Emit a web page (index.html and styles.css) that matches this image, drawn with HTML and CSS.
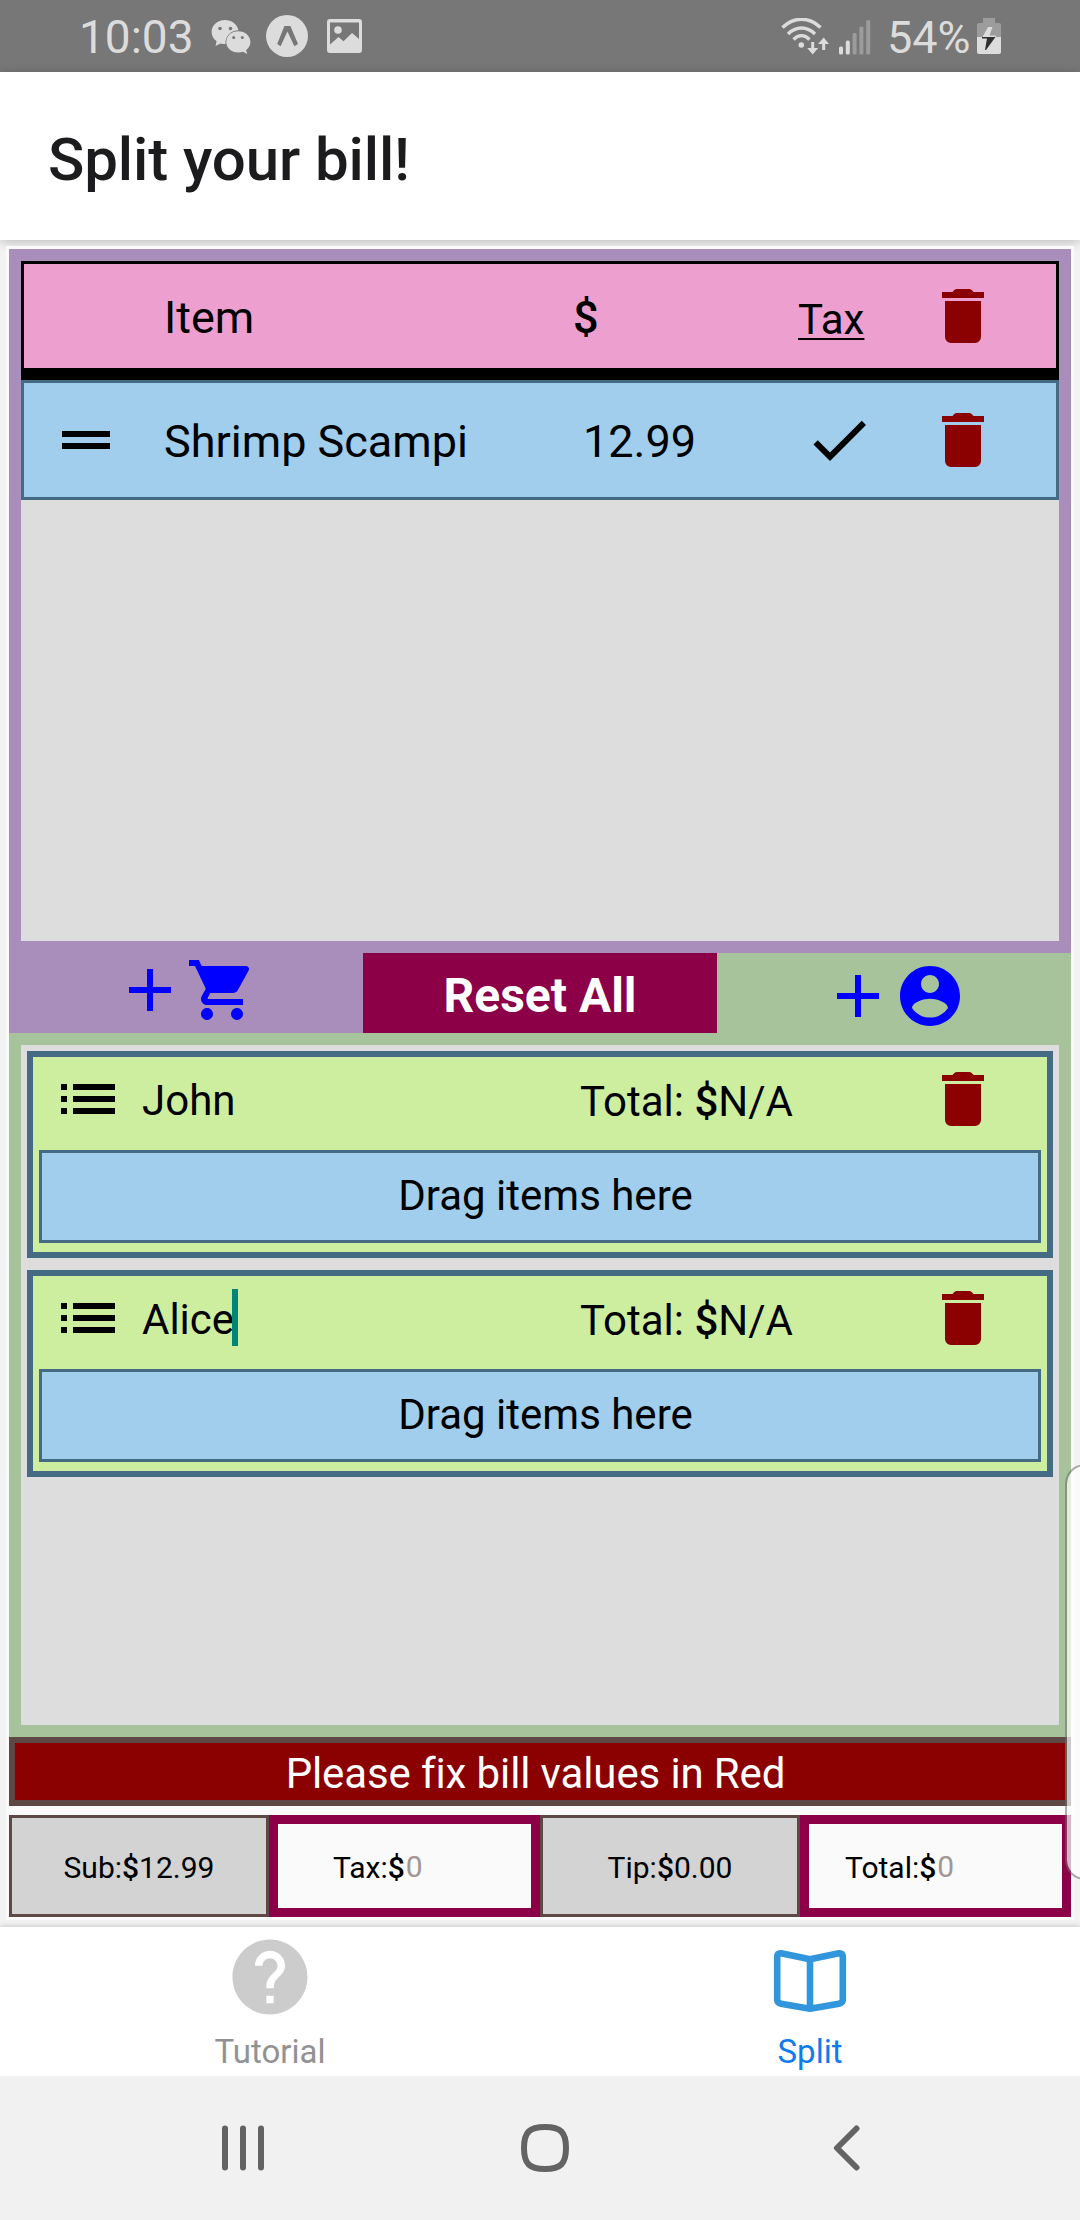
FILE: index.html
```html
<!DOCTYPE html>
<html lang="en">
<head>
<meta charset="utf-8">
<title>Split your bill!</title>
<link rel="stylesheet" href="styles.css">
</head>
<body>
<svg class="sprite" width="0" height="0" aria-hidden="true">
  <symbol id="trash" viewBox="0 0 24 24"><path d="M19 4h-3.5l-.6-.65Q14.500 3 14 3h-4q-.5 0-.9.350L8.500 4H5v2h14zM6 19a2 2 0 0 0 2 2h8a2 2 0 0 0 2-2V7H6z"/></symbol>
  <symbol id="handle" viewBox="0 0 24 24"><path d="M20 9H4v2h16V9zM4 15h16v-2H4v2z"/></symbol>
  <symbol id="check" viewBox="0 0 24 24"><path d="M21 7L9 19l-5.500-5.500 1.410-1.410L9 16.170 19.590 5.590 21 7z"/></symbol>
  <symbol id="list" viewBox="0 0 24 24"><path d="M3 13h2v-2H3v2zm0 4h2v-2H3v2zm0-8h2V7H3v2zm4 4h14v-2H7v2zm0 4h14v-2H7v2zM7 7v2h14V7H7z"/></symbol>
  <symbol id="plus" viewBox="0 0 24 24"><path d="M19 13h-6v6h-2v-6H5v-2h6V5h2v6h6v2z"/></symbol>
  <symbol id="cart" viewBox="0 0 24 24"><path d="M7 18c-1.1 0-1.99.9-1.99 2S5.900 22 7 22s2-.9 2-2-.9-2-2-2zM1 2v2h2l3.600 7.590-1.350 2.450c-.16.28-.25.61-.25.96 0 1.100.9 2 2 2h12v-2H7.420c-.14 0-.25-.11-.25-.25l.03-.12.9-1.630h7.450c.75 0 1.410-.41 1.750-1.030l3.580-6.490c.08-.14.12-.31.12-.48 0-.55-.45-1-1-1H5.210l-.94-2H1zm16 16c-1.1 0-1.99.9-1.99 2s.89 2 1.990 2 2-.9 2-2-.9-2-2-2z"/></symbol>
  <symbol id="person" viewBox="0 0 24 24"><path d="M12 2C6.480 2 2 6.480 2 12s4.480 10 10 10 10-4.480 10-10S17.520 2 12 2zm0 3c1.660 0 3 1.340 3 3s-1.340 3-3 3-3-1.340-3-3 1.340-3 3-3zm0 14.200c-2.500 0-4.710-1.280-6-3.220.03-1.990 4-3.080 6-3.080 1.990 0 5.970 1.090 6 3.080-1.290 1.940-3.500 3.220-6 3.220z"/></symbol>
  <symbol id="help" viewBox="0 0 24 24"><path d="M12 2C6.480 2 2 6.480 2 12s4.480 10 10 10 10-4.480 10-10S17.520 2 12 2zm1 17h-2v-2h2v2zm2.070-7.750l-.9.92C13.450 12.900 13 13.500 13 15h-2v-.5c0-1.100.45-2.100 1.170-2.830l1.240-1.260c.37-.36.59-.86.59-1.410 0-1.100-.9-2-2-2s-2 .9-2 2H8c0-2.210 1.790-4 4-4s4 1.790 4 4c0 .88-.36 1.680-.93 2.250z"/></symbol>
</svg>

<header class="status">
  <span class="clock">10:03</span>
  <svg class="wechat" width="40" height="36" viewBox="0 0 40 36">
    <path d="M14 1C6.500 1 .6 6 .6 13c0 4 2 7.200 5 9.200L4.500 27l5-2.600c1.400.4 3 .6 5 .6C14 17 20 11.500 27.500 11.300 26 5 20.500 1 14 1z"/>
    <path d="M27.300 12.300C20.500 12.300 15.300 17 15.300 23s5.200 10.500 12 10.500c1.700 0 3.200-.3 4.700-.8l4.300 2.300-1.200-3.900c2.700-2 4.300-4.800 4.300-8.100 0-6-5.300-10.700-12.100-10.700z"/>
    <g class="hole"><circle cx="9" cy="9.500" r="1.800"/><circle cx="19.500" cy="9.500" r="1.800"/><circle cx="22.700" cy="18.500" r="1.500"/><circle cx="31.300" cy="18.500" r="1.500"/></g>
  </svg>
  <svg class="expo" width="42" height="42" viewBox="0 0 42 42">
    <circle cx="21" cy="21" r="21"/>
    <path class="hole" d="M18.400 11h6l7.600 18-3.600 2.200L21.400 16.500 14.600 31.200 11.200 29z"/>
  </svg>
  <svg class="photo" width="35" height="34" viewBox="0 0 35 34">
    <path fill-rule="evenodd" d="M3 0h29a3 3 0 0 1 3 3v28a3 3 0 0 1-3 3H3a3 3 0 0 1-3-3V3a3 3 0 0 1 3-3zm0 3.500V25.500l8.500-7.500 5 4.200 8.500-8.200 7 6V3.500z"/>
    <circle cx="11" cy="11" r="3.800"/>
  </svg>
  <span class="spacer"></span>
  <svg class="wifi" width="49" height="37" viewBox="0 0 49 37">
    <g fill="none" stroke="#dcdcdc" stroke-width="3.400">
      <path d="M1.500 9.500C13-1.500 28-1.500 39.500 9.500"/><path d="M7 16C15 8 26 8 34 16"/><path d="M12.500 21.500C17.500 16.500 23.500 16.500 28.500 21.500"/>
    </g>
    <circle cx="20.300" cy="27" r="2.800"/>
    <path d="M30.200 24h3v6h4l-5.500 6.500-5.500-6.500h4zM41.200 32h3v-6H48l-5.300-6.500L37 26h4.200z"/>
  </svg>
  <svg class="signal" width="32" height="35" viewBox="0 0 32 35">
    <rect x="0" y="26.500" width="4" height="8" rx="1.500"/><rect x="6.800" y="20.500" width="4" height="14" rx="1.500"/>
    <g fill="#9c9c9c"><rect x="13.600" y="13" width="4" height="21.500" rx="1.500"/><rect x="20.400" y="6.500" width="4" height="28" rx="1.500"/><rect x="27.200" y="0" width="4" height="34.500" rx="1.500"/></g>
  </svg>
  <span class="percent">54%</span>
  <svg class="battery" width="24" height="36" viewBox="0 0 24 36">
    <path fill="#9c9c9c" d="M6 0h12v5h4q2 0 2 2v13H0V7q0-2 2-2h4z"/>
    <path d="M0 19h24v15q0 2-2 2H2q-2 0-2-2z"/>
    <path d="M11 9h4.500l-3 8.500H19l-.5 1.500H5.500z"/>
    <path fill="#303030" d="M5 19h13.500L9 32h-1l2-11.500H5z"/>
  </svg>
</header>

<div class="titlebar"><h1>Split your bill!</h1></div>

<main class="screen">
  <div class="app">
    <section class="items">
      <div class="row row-head">
        <span></span>
        <span class="name">Item</span>
        <span class="price"><b>$</b></span>
        <span class="tax">Tax</span>
        <svg class="icon danger"><use href="#trash"/></svg>
      </div>
      <div class="row row-item">
        <svg class="icon grip"><use href="#handle"/></svg>
        <span class="name">Shrimp Scampi</span>
        <span class="price amount">12.99</span>
        <svg class="icon tick"><use href="#check"/></svg>
        <svg class="icon danger"><use href="#trash"/></svg>
      </div>
    </section>

    <div class="actions">
      <div class="add add-item"><svg class="icon"><use href="#plus"/></svg><svg class="icon"><use href="#cart"/></svg></div>
      <div class="reset"><span>Reset All</span></div>
      <div class="add add-person"><svg class="icon"><use href="#plus"/></svg><svg class="icon"><use href="#person"/></svg></div>
    </div>

    <section class="people">
      <article class="person">
        <div class="person-head">
          <svg class="icon"><use href="#list"/></svg>
          <span class="who">John</span>
          <span class="sum">Total: <b>$</b>N/A</span>
          <svg class="icon danger"><use href="#trash"/></svg>
        </div>
        <div class="drop">Drag items here</div>
      </article>
      <article class="person">
        <div class="person-head">
          <svg class="icon"><use href="#list"/></svg>
          <span class="who">Alice<i class="caret"></i></span>
          <span class="sum">Total: <b>$</b>N/A</span>
          <svg class="icon danger"><use href="#trash"/></svg>
        </div>
        <div class="drop">Drag items here</div>
      </article>
    </section>

    <div class="warning">Please fix bill values in Red</div>

    <div class="totals">
      <div class="box"><span>Sub:<b>$</b>12.99</span></div>
      <div class="box invalid tax-box"><span>Tax:<b>$</b></span><span class="hint">0</span></div>
      <div class="box"><span>Tip:<b>$</b>0.00</span></div>
      <div class="box invalid total-box"><span>Total:<b>$</b></span><span class="hint">0</span></div>
    </div>
  </div>
  <div class="edge-panel"></div>
</main>

<nav class="tabs">
  <div class="tab"><svg class="tab-icon" width="90" height="90"><use href="#help"/></svg><span>Tutorial</span></div>
  <div class="tab active">
    <svg class="tab-icon" width="90" height="90" viewBox="0 0 90 90">
      <path d="M45 27.200L16 21.300Q12.200 20.800 12.200 25V67.500Q12.200 71 16 71.700L45 76.800 74 71.700Q77.800 71 77.800 67.500V25Q77.800 20.800 74 21.300zV76"/>
    </svg>
    <span>Split</span>
  </div>
</nav>

<footer class="sysnav">
  <svg width="42" height="46" viewBox="0 0 42 46"><path d="M3 3.500v39M21 3.500v39M39 3.500v39"/></svg>
  <svg width="48" height="48" viewBox="0 0 48 48"><path d="M24 3C39.500 3 45 8 45 24S39.500 45 24 45 3 40 3 24 8.500 3 24 3z"/></svg>
  <svg width="27" height="46" viewBox="0 0 27 46"><path d="M23.500 3.500L4 23l19.500 19.500"/></svg>
</footer>
</body>
</html>
```
FILE: styles.css
```css
* { box-sizing: border-box; }

body {
  margin: 0;
  width: 1080px;
  height: 2220px;
  display: flex;
  flex-direction: column;
  font-family: Roboto, sans-serif;
  color: #000;
  background: #f2f2f2;
  overflow: hidden;
}

.sprite { position: absolute; }
svg { display: block; flex: none; }
b { font-weight: 500; }
.icon { width: 72px; height: 72px; }

/* Status bar */
.status {
  height: 72px;
  padding: 0 79px 0 79px;
  display: flex;
  align-items: flex-start;
  background: #777;
  color: #dcdcdc;
  fill: #dcdcdc;
}
.clock { font-size: 46px; line-height: 74px; width: 132px; }
.wechat { margin-top: 19px; }
.expo { margin: 15px 0 0 15px; }
.photo { margin: 19px 0 0 19px; }
.hole { fill: #777; }
.spacer { flex: 1; }
.wifi { margin: 18px 9px 0 0; }
.signal { margin: 20px 16px 0 0; }
.percent { font-size: 45px; line-height: 75px; width: 90px; }
.battery { margin-top: 18px; }

/* Title */
.titlebar {
  height: 168px;
  padding: 0 48px;
  display: flex;
  align-items: center;
  background: #fff;
  box-shadow: 0 2px 10px rgba(0, 0, 0, .22);
}
h1 {
  margin: 7px 0 0;
  font-size: 60px;
  font-weight: 500;
  line-height: 80px;
  letter-spacing: -.1px;
  color: #1c1c1e;
}

/* Main area */
.screen {
  height: 1687px;
  padding: 6px 6px 7px;
  position: relative;
}
.app {
  height: 1674px;
  padding: 3px;
  background: #fafafa;
}
.items {
  height: 704px;
  border: 12px solid #a98dba;
  background: #ddd;
}
.row {
  display: grid;
  grid-template-columns: 140px 409px 225px 129px 72px;
  align-items: center;
  font-size: 45px;
}
.row-head {
  height: 119px;
  border: 3px solid #000;
  border-bottom-width: 12px;
  background: #ed9fcf;
}
.row-item {
  height: 120px;
  border: 3px solid #456b84;
  background: #a0ceec;
}
.name, .price { padding-top: 3px; }
.tax {
  padding-top: 6px;
  font-size: 42px;
  text-decoration: underline;
  text-decoration-thickness: 2px;
  text-underline-offset: 4px;
}
.amount { padding-left: 10px; }
.grip { margin-left: 26px; }
.tick { margin-left: 5px; }
.danger { fill: #8b0000; }

.actions {
  height: 80px;
  display: grid;
  grid-template-columns: repeat(3, 354px);
}
.add { display: flex; justify-content: center; fill: #00f; }
.add-item { padding-top: 1px; background: #a98dba; }
.add-person { padding-top: 7px; background: #a7c39b; }
.reset {
  display: flex;
  align-items: center;
  justify-content: center;
  background: #8b0046;
  color: #fff;
  font-size: 48px;
  font-weight: 700;
  padding-top: 4px;
}

.people {
  height: 704px;
  padding: 6px;
  border: 12px solid #a7c39b;
  background: #ddd;
  display: flex;
  flex-direction: column;
  gap: 12px;
}
.person {
  height: 207px;
  padding: 6px;
  border: 6px solid #456b84;
  background: #ceee9f;
}
.person-head {
  height: 87px;
  padding-left: 13px;
  display: grid;
  grid-template-columns: 90px 438px 347px 72px;
  font-size: 42px;
  line-height: 72px;
}
.who { display: flex; align-items: center; padding-top: 1px; height: 74px; }
.sum { padding-top: 3px; }
.caret { width: 6px; height: 57px; background: #008577; margin: -4px 0 0 -2px; }
.drop {
  height: 93px;
  padding-left: 11px;
  border: 3px solid #456b84;
  background: #a0ceec;
  font-size: 42px;
  line-height: 86px;
  text-align: center;
}

.warning {
  height: 69px;
  padding-right: 9px;
  border: 6px solid #5e4846;
  background: #8b0000;
  color: #fff;
  font-size: 42px;
  line-height: 61px;
  letter-spacing: -.12px;
  text-align: center;
}
.totals {
  margin-top: 9px;
  height: 102px;
  display: grid;
  grid-template-columns: 260px 271px 260px 271px;
  font-size: 30px;
  line-height: 36px;
}
.box {
  display: flex;
  align-items: center;
  justify-content: center;
  padding-top: 3px;
  border: 3px solid #5e4846;
  background: #d3d3d3;
}
.invalid {
  justify-content: flex-start;
  border: 9px solid #8b0046;
  background: #fafafa;
}
.tax-box { padding-left: 55px; }
.total-box { padding-left: 36px; }
.hint { color: #a09694; margin: -2px 0 0 1px; }

.edge-panel {
  position: absolute;
  left: 1065px;
  top: 1224px;
  width: 40px;
  height: 416px;
  border: 2px solid rgba(110, 110, 110, .55);
  border-radius: 20px;
  background: rgba(255, 255, 255, .7);
  background-clip: padding-box;
}

/* Bottom tabs */
.tabs {
  position: relative;
  height: 149px;
  display: grid;
  grid-template-columns: 1fr 1fr;
  background: #fff;
  box-shadow: 0 -1px 5px rgba(0, 0, 0, .16);
}
.tab {
  padding-top: 5px;
  display: flex;
  flex-direction: column;
  align-items: center;
  font-size: 33px;
  line-height: 40px;
  color: #929292;
  fill: #ccc;
}
.tab span { margin-top: 10px; }
.active { color: #0f7bec; fill: none; stroke: #3296dc; stroke-width: 6.6; }
.active path { stroke-linejoin: round; }

/* System navigation */
.sysnav {
  position: relative;
  height: 144px;
  padding: 0 220px 0 222px;
  display: flex;
  align-items: center;
  justify-content: space-between;
  background: #f1f1f1;
  fill: none;
  stroke: #636363;
  stroke-width: 6;
  stroke-linecap: round;
  stroke-linejoin: round;
}
.sysnav svg:nth-child(2) { margin-right: 7px; }
```
